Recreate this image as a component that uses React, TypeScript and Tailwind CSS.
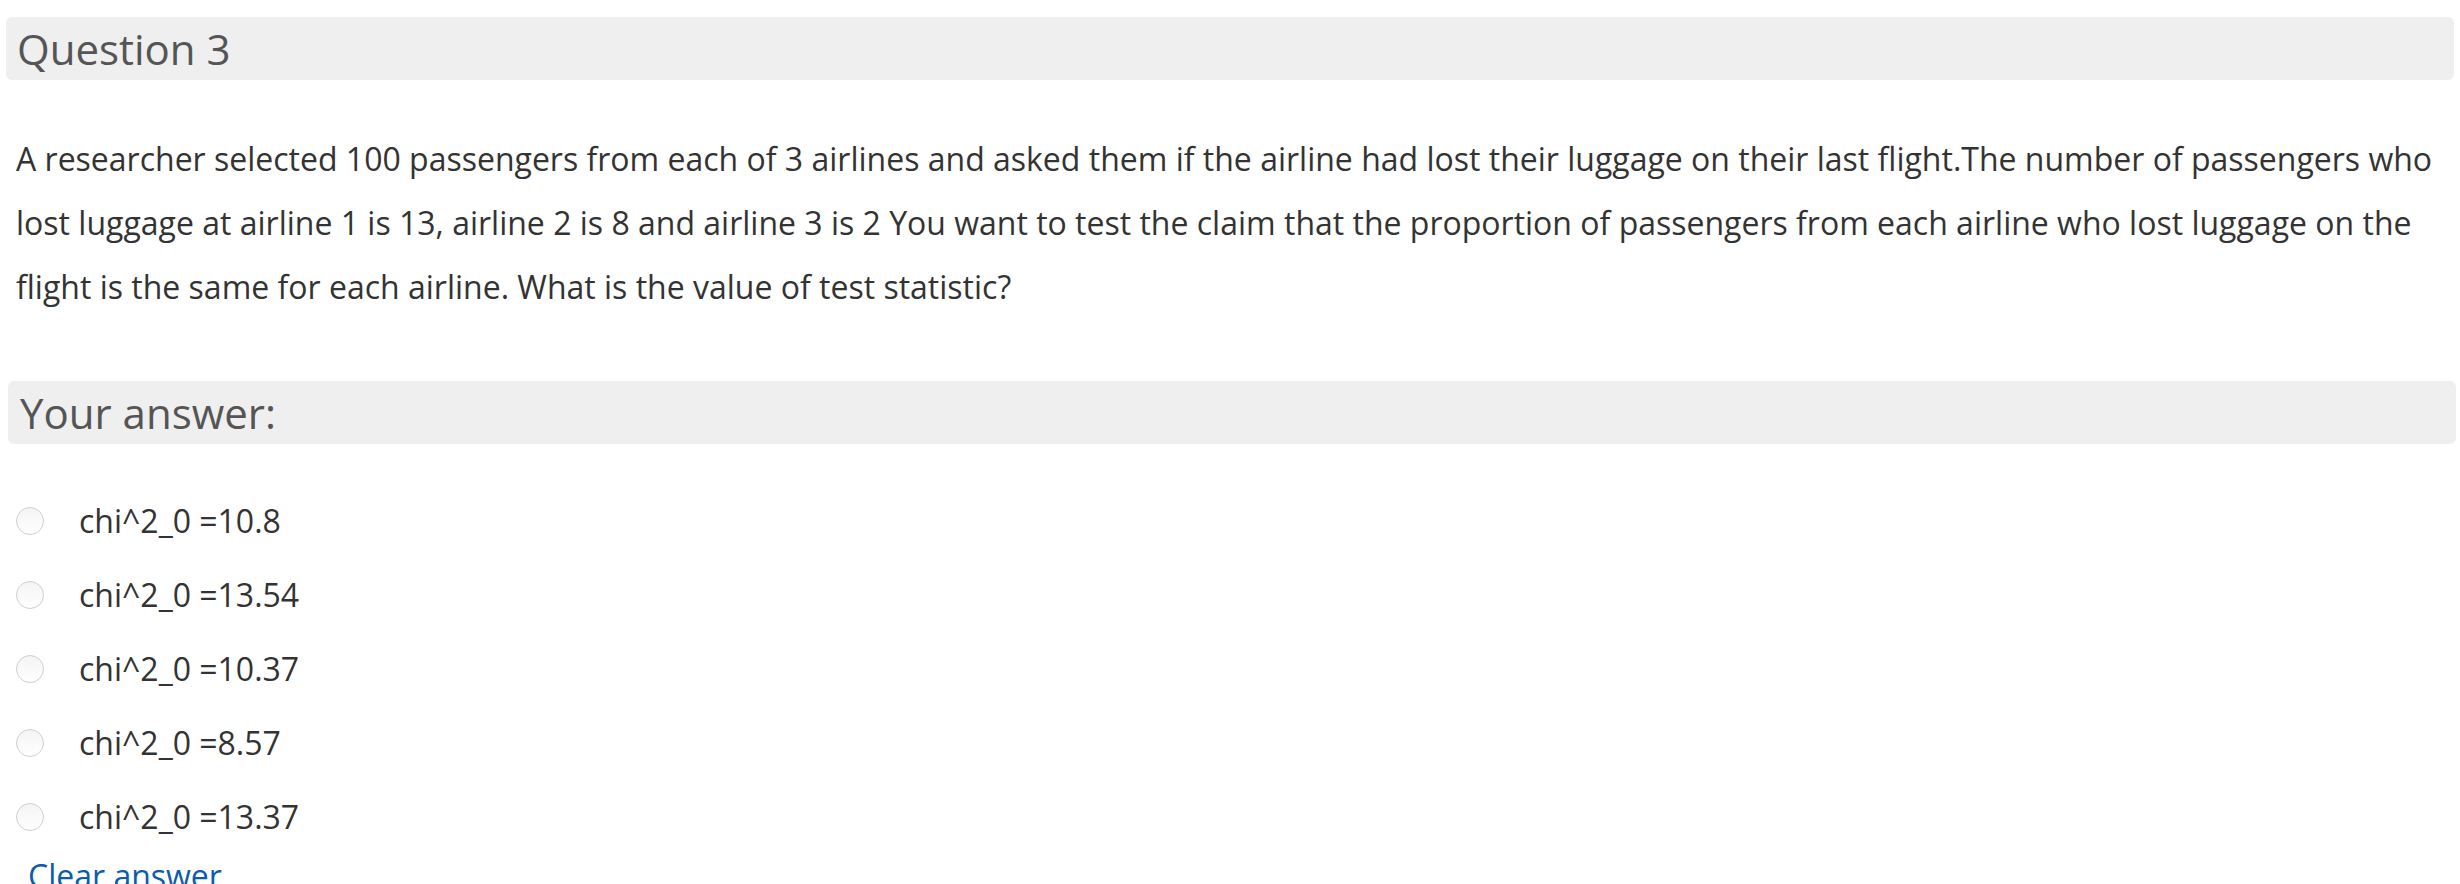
const options = [
  "chi^2_0 =10.8",
  "chi^2_0 =13.54",
  "chi^2_0 =10.37",
  "chi^2_0 =8.57",
  "chi^2_0 =13.37",
];

export default function App() {
  return (
    <div
      className="h-[884px] overflow-hidden bg-white px-[6px] pt-[17px] text-[#333]"
      style={{ fontFamily: '"Open Sans", "Liberation Sans", sans-serif' }}
    >
      <div className="h-[63px] rounded-[6px] bg-[#efefef] pl-[11px] text-[42px] leading-[63px] text-[#555]">
        Question 3
      </div>

      <p className="mt-[47px] pl-[10px] text-[32px] leading-[64px]">
        A researcher selected 100 passengers from each of 3 airlines and asked them if the airline had lost their
        luggage on their last flight.The number of passengers who lost luggage at airline 1 is 13, airline 2 is 8 and
        airline 3 is 2 You want to test the claim that the proportion of passengers from each airline who lost luggage
        on the flight is the same for each airline. What is the value of test statistic?
      </p>

      <div className="ml-[2px] mr-[-2px] mt-[62px] h-[63px] rounded-[6px] bg-[#efefef] pl-[12px] text-[42px] leading-[63px] text-[#555]">
        Your answer:
      </div>

      <div className="mt-[40px] flex flex-col">
        {options.map((o) => (
          <label key={o} className="flex h-[74px] items-center">
            <span className="ml-[10px] h-[28px] w-[28px] shrink-0 rounded-full border border-[#cfcfcf] bg-gradient-to-b from-[#f4f4f4] to-white" />
            <span className="ml-[35px] text-[32px]">{o}</span>
          </label>
        ))}
      </div>

      <a className="ml-[22px] block text-[32px] leading-[44px] text-[#0b5cad]">Clear answer</a>
    </div>
  );
}
